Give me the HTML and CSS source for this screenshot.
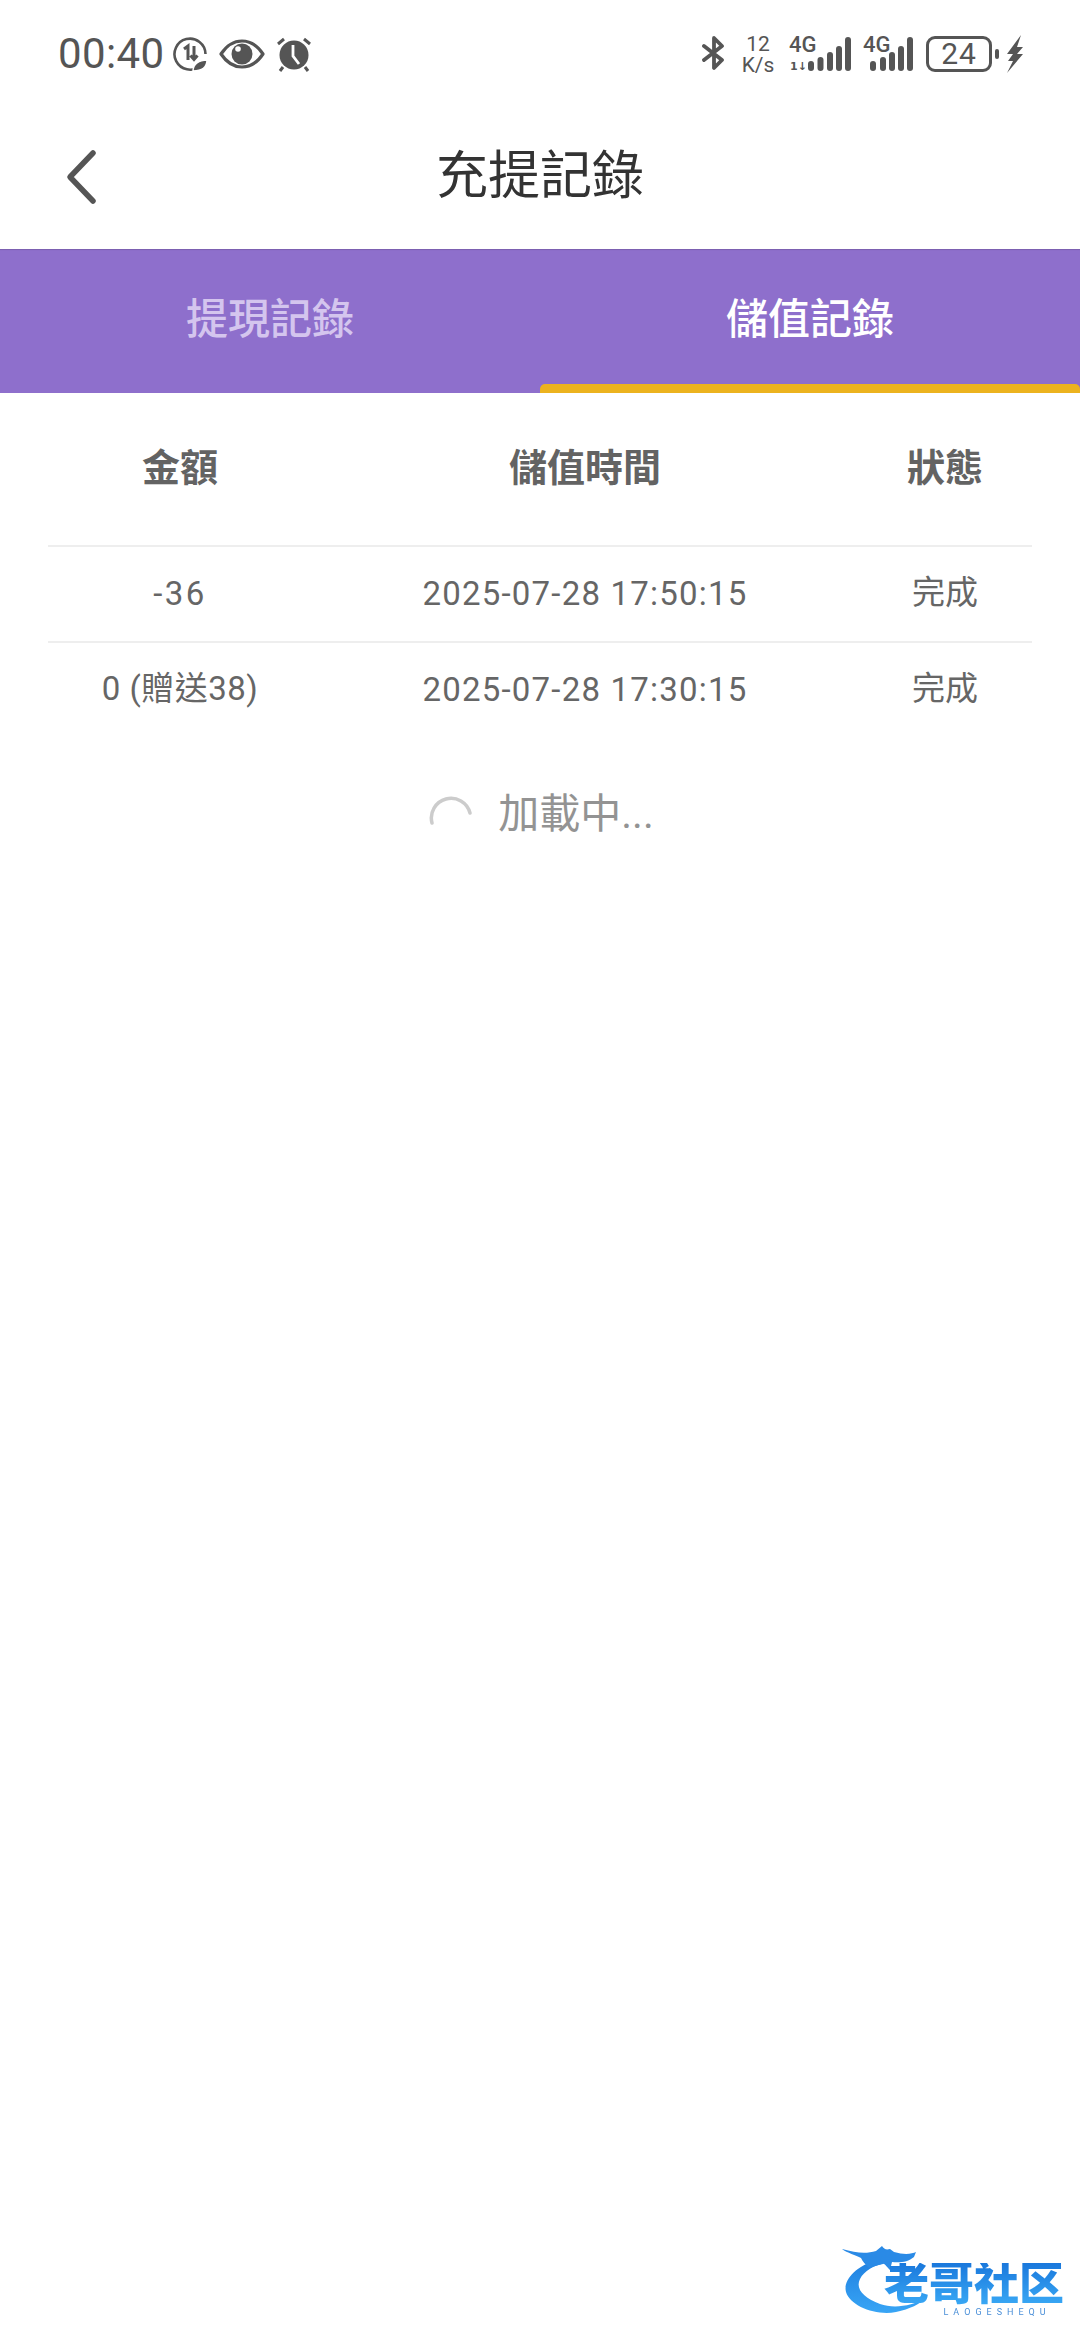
FILE: index.html
```html
<!DOCTYPE html>
<html lang="zh-Hant">
<head>
<meta charset="utf-8">
<title>充提記錄</title>
<link rel="stylesheet" href="styles.css">
</head>
<body>
<div class="page">
  <header class="status">
    <div class="status-left">
      <span class="clock">00:40</span>
      <svg class="ic" width="36" height="36" viewBox="0 0 36 36"><path d="M28 30A15.5 15.5 0 1 1 33.5 18" fill="none" stroke="#555" stroke-width="2.6"/><path d="M12 13l4-3v14M22 10v13m-3.500-3.500l3.500 4 3.500-4" fill="none" stroke="#555" stroke-width="3"/><path d="M21 35c0-7 6-11 14-11 0 7-5 11-14 11z" fill="#555" stroke="#fff" stroke-width="1.500"/></svg>
      <svg class="ic" width="46" height="32" viewBox="0 0 46 32"><path d="M2 16C8 7 15 3 23 3s15 4 21 13c-6 9-13 13-21 13S8 25 2 16z" fill="none" stroke="#555" stroke-width="3.200" stroke-linejoin="round"/><circle cx="23" cy="16" r="10.500" fill="#555"/><circle cx="19" cy="11" r="2.800" fill="#fff"/></svg>
      <svg class="ic" width="36" height="36" viewBox="0 0 36 36"><circle cx="18" cy="19" r="14.500" fill="#555"/><path d="M17 9v11l6 8" fill="none" stroke="#fff" stroke-width="2.800"/><path d="M2 8l6-5M34 8l-6-5M7 31l-3 4M29 31l3 4" stroke="#555" stroke-width="3"/></svg>
    </div>
    <div class="status-right">
      <svg class="ic bt" width="24" height="36" viewBox="0 0 24 36"><path d="M2 11l18 14-8 8V3l8 8L2 25" fill="none" stroke="#555" stroke-width="3.800" stroke-linejoin="round" stroke-linecap="round"/></svg>
      <div class="speed"><span>12</span><span>K/s</span></div>
      <svg class="ic sim1" width="62" height="48" viewBox="0 -6 62 48"><text x="0" y="16" class="net">4G</text><text x="1" y="34" class="net-small">1↓</text><g fill="#555"><rect x="19" y="25" width="6" height="10" rx="3"/><rect x="28.500" y="21" width="6" height="14" rx="3"/><rect x="38" y="16" width="6" height="19" rx="3"/><rect x="47" y="10" width="6" height="25" rx="3"/><rect x="56" y="1" width="6" height="34" rx="3"/></g></svg>
      <svg class="ic sim2" width="50" height="48" viewBox="0 -6 50 48"><text x="0" y="16" class="net">4G</text><g fill="#555"><rect x="7" y="25" width="6" height="10" rx="3"/><rect x="17" y="21" width="6" height="14" rx="3"/><rect x="26" y="16" width="6" height="19" rx="3"/><rect x="35" y="10" width="6" height="25" rx="3"/><rect x="44" y="1" width="6" height="34" rx="3"/></g></svg>
      <div class="battery"><span>24</span></div>
      <span class="battery-tip"></span>
      <svg class="ic bolt" width="18" height="38" viewBox="0 0 18 38"><path d="M15 0L1 19h6L2 26h5L1 38 17 19h-6l6-7h-6z" fill="#555"/></svg>
    </div>
  </header>

  <nav class="nav">
    <svg class="back" width="32" height="56" viewBox="0 0 32 56"><path d="M27 4L4 28l23 24" fill="none" stroke="#555" stroke-width="5.500" stroke-linecap="round" stroke-linejoin="round"/></svg>
    <h1 class="title">充提記錄</h1>
  </nav>

  <div class="tabs">
    <div class="tab">提現記錄</div>
    <div class="tab tab-active">儲值記錄</div>
  </div>

  <section class="table">
    <div class="row row-head"><span>金額</span><span>儲值時間</span><span>狀態</span></div>
    <div class="row"><span class="neg">-36</span><span class="date">2025-07-28 17:50:15</span><span>完成</span></div>
    <div class="row row-last"><span class="amt">0 (贈送38)</span><span class="date">2025-07-28 17:30:15</span><span>完成</span></div>
  </section>

  <div class="loading">
    <svg width="44" height="32" viewBox="0 0 44 32"><path d="M3 29A19.500 19.500 0 0 1 41 19" fill="none" stroke="#ccc" stroke-width="3.500" stroke-linecap="round"/></svg>
    <span>加載中...</span>
  </div>

  <div class="watermark">
    <svg class="dragon" width="100" height="70" viewBox="0 0 100 70"><defs><linearGradient id="dg" x1="0" y1="0" x2="0" y2="1"><stop offset="0" stop-color="#1f7fe0"/><stop offset="1" stop-color="#38a5f5"/></linearGradient></defs><path d="M36 14C12 22 1 36 4 47c4 14 30 24 50 20 14-3 24-8 30-14-14 8-32 11-46 6C22 53 13 44 18 34c4-8 14-14 26-16z" fill="url(#dg)"/><path d="M0 4c14 4 24 5 34 2l6-5c2 3 4 4 8 3l4 3c10 3 18 2 22 0l-2 5c-6 5-14 6-22 5l-2 8c-4-4-6-7-7-6-6 1-10 3-14 4-4-4-6-6-8-10C14 10 5 8 0 4z" fill="#2a8ae6"/></svg>
    <div class="wm-text">
      <span class="wm-cn">老哥社区</span>
      <span class="wm-en">LAOGESHEQU</span>
    </div>
  </div>
</div>
</body>
</html>
```

FILE: styles.css
```css
* { box-sizing: border-box; }
html, body { margin: 0; padding: 0; background: #fff; }
body { font-family: Roboto, "Noto Sans CJK TC", sans-serif; }
.page { position: relative; width: 1080px; height: 2340px; overflow: hidden; background: #fff; }

.status { height: 108px; display: flex; justify-content: space-between; align-items: flex-start; padding: 0 56px 0 58px; color: #555; }
.status-left { display: flex; align-items: center; height: 108px; }
.clock { font-size: 42px; line-height: 1; width: 114px; font-family: "Roboto", sans-serif; letter-spacing: 0.4px; }
.ic { display: block; flex: none; }
.status-left .ic:nth-of-type(2) { margin-left: 11px; }
.status-left .ic:nth-of-type(3) { margin-left: 11px; }
.status-right { display: flex; align-items: center; height: 108px; }
.bt { margin-top: -2px; }
.speed { width: 36px; margin-left: 14px; display: flex; flex-direction: column; align-items: center; font-size: 21px; line-height: 21px; margin-top: 1px; }
.sim1 { margin-left: 13px; }
.sim2 { margin-left: 12px; }
.net { font: 500 22px "Roboto", sans-serif; fill: #555; }
.net-small { font: 700 11px "DejaVu Sans", sans-serif; fill: #555; }
.battery { width: 66px; height: 36px; margin-left: 13px; border: 3px solid #555; border-radius: 9px; display: flex; align-items: center; justify-content: center; font-size: 30px; line-height: 1; letter-spacing: 1px; }
.battery-tip { width: 4px; height: 10px; margin-left: 3px; border-radius: 2px; background: #555; }
.bolt { margin-left: 7px; }

.nav { position: relative; height: 141px; display: flex; align-items: center; justify-content: center; }
.back { position: absolute; left: 66px; top: 41px; }
.title { margin: 0; font-size: 52px; font-weight: 400; color: #333; line-height: 1; position: relative; top: -2px; }

.tabs { height: 144px; display: flex; background: #8e6fcc; box-shadow: inset 0 2px 1px -1px #7a5fae; }
.tab { flex: 1; display: flex; align-items: center; justify-content: center; padding-bottom: 11px; font-size: 42px; font-weight: 500; color: #d4c5ee; }
.tab-active { color: #fff; position: relative; }
.tab-active::after { content: ""; position: absolute; left: 0; right: 0; bottom: 0; height: 9px; background: #ecb31f; border-radius: 5px 5px 0 0; }

.table { margin: 0 48px; }
.row { display: grid; grid-template-columns: 264px 546px 174px; align-items: center; height: 96px; padding-bottom: 8px; border-top: 2px solid #eee; font-size: 33px; color: #666; text-align: center; }
.row-head { height: 152px; border-top: 0; font-size: 38px; font-weight: 700; color: #636363; padding-bottom: 9px; }
.date { letter-spacing: 1.2px; position: relative; top: 3px; }
.neg { letter-spacing: 2.5px; position: relative; top: 3px; }
.amt { letter-spacing: 0.5px; }

.loading { display: flex; align-items: center; justify-content: center; gap: 25px; height: 146px; padding-left: 3px; font-size: 41px; color: #939393; }

.watermark { position: absolute; left: 842px; top: 2245px; width: 224px; height: 70px; filter: blur(0.6px); }
.dragon { position: absolute; left: 0; top: 0; }
.wm-text { position: absolute; left: 41px; top: 18px; display: flex; flex-direction: column; align-items: center; width: 182px; }
.wm-cn { font-size: 45px; font-weight: 900; line-height: 44px; background: linear-gradient(#1a78dc, #3aaaf6); -webkit-background-clip: text; background-clip: text; color: transparent; }
.wm-en { font-size: 9px; line-height: 10px; letter-spacing: 5px; color: #4a8fd8; margin-left: 46px; }
```
